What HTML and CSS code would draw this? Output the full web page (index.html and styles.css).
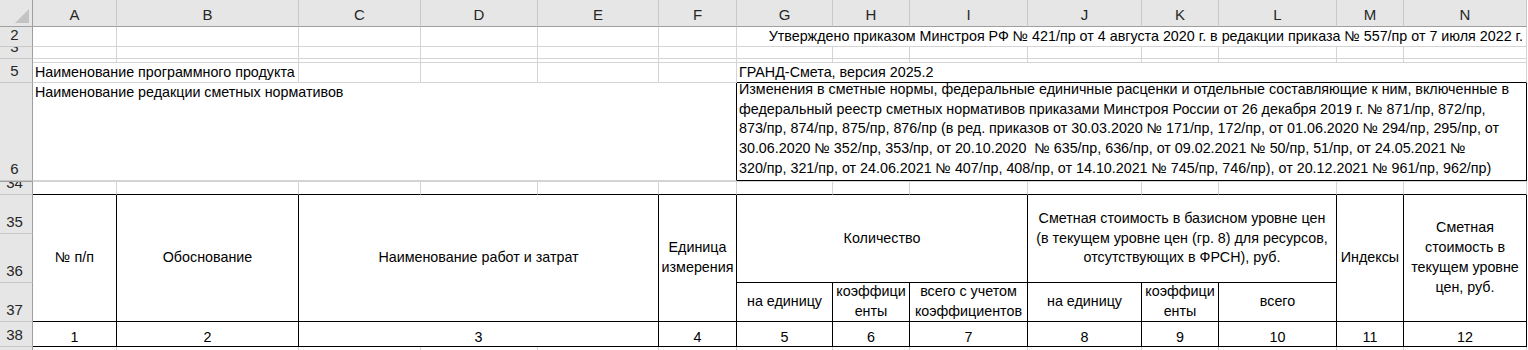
FILE: index.html
```html
<!DOCTYPE html>
<html lang="ru">
<head>
<meta charset="utf-8">
<title>Смета</title>
<link rel="stylesheet" href="styles.css">
</head>
<body>
<div class="sheet">
  <!-- column headers -->
  <div class="corner"><svg class="corner-tri" width="32" height="26" viewBox="0 0 32 26"><polygon points="15,23 29,23 29,9" fill="#c3c3c3"/></svg></div>
  <div class="colhead">A</div>
  <div class="colhead">B</div>
  <div class="colhead">C</div>
  <div class="colhead">D</div>
  <div class="colhead">E</div>
  <div class="colhead">F</div>
  <div class="colhead">G</div>
  <div class="colhead">H</div>
  <div class="colhead">I</div>
  <div class="colhead">J</div>
  <div class="colhead">K</div>
  <div class="colhead">L</div>
  <div class="colhead">M</div>
  <div class="colhead">N</div>

  <!-- row 2 -->
  <div class="rowhead"><span>2</span></div>
  <div class="cell"></div><div class="cell"></div><div class="cell"></div>
  <div class="cell"></div><div class="cell"></div><div class="cell"></div>
  <div class="cell span8 align-right">Утверждено приказом Минстроя РФ № 421/пр от 4 августа 2020 г. в редакции приказа № 557/пр от 7 июля 2022 г.</div>

  <!-- row 3 -->
  <div class="rowhead"><span>3</span></div>
  <div class="cell"></div><div class="cell"></div><div class="cell"></div><div class="cell"></div>
  <div class="cell"></div><div class="cell"></div><div class="cell"></div><div class="cell"></div>
  <div class="cell"></div><div class="cell"></div><div class="cell"></div><div class="cell"></div>
  <div class="cell"></div><div class="cell"></div>

  <!-- row 4 -->
  <div class="rowhead"></div>
  <div class="cell"></div><div class="cell"></div><div class="cell"></div><div class="cell"></div>
  <div class="cell"></div><div class="cell"></div><div class="cell"></div><div class="cell"></div>
  <div class="cell"></div><div class="cell"></div><div class="cell"></div><div class="cell"></div>
  <div class="cell"></div><div class="cell"></div>

  <!-- row 5 -->
  <div class="rowhead"><span>5</span></div>
  <div class="cell span2">Наименование программного продукта</div>
  <div class="cell"></div><div class="cell"></div><div class="cell"></div><div class="cell"></div>
  <div class="cell span8 edge-bottom">ГРАНД-Смета, версия 2025.2</div>

  <!-- row 6 -->
  <div class="rowhead"><span>6</span></div>
  <div class="cell span6 edge-right">Наименование редакции сметных нормативов</div>
  <div class="cell span8 edge-right edge-bottom">
    <div class="distributed">Изменения в сметные нормы, федеральные единичные расценки и отдельные составляющие к ним, включенные в<br>федеральный реестр сметных нормативов приказами Минстроя России от 26 декабря 2019 г. № 871/пр, 872/пр,<br>873/пр, 874/пр, 875/пр, 876/пр (в ред. приказов от 30.03.2020 № 171/пр, 172/пр, от 01.06.2020 № 294/пр, 295/пр, от<br>30.06.2020 № 352/пр, 353/пр, от 20.10.2020&nbsp; № 635/пр, 636/пр, от 09.02.2021 № 50/пр, 51/пр, от 24.05.2021 №<br>320/пр, 321/пр, от 24.06.2021 № 407/пр, 408/пр, от 14.10.2021 № 745/пр, 746/пр), от 20.12.2021 № 961/пр, 962/пр)</div>
  </div>

  <!-- hidden rows 7-33 -->
  <div class="rowhead hidden-rows"></div>
  <div class="cell span14 collapsed"></div>

  <!-- row 34 -->
  <div class="rowhead"><span>34</span></div>
  <div class="cell edge-bottom"></div><div class="cell edge-bottom"></div><div class="cell edge-bottom"></div>
  <div class="cell edge-bottom"></div><div class="cell edge-bottom"></div><div class="cell edge-bottom"></div>
  <div class="cell edge-bottom"></div><div class="cell edge-bottom"></div><div class="cell edge-bottom"></div>
  <div class="cell edge-bottom"></div><div class="cell edge-bottom"></div><div class="cell edge-bottom"></div>
  <div class="cell edge-bottom"></div><div class="cell edge-bottom"></div>

  <!-- row 35 -->
  <div class="rowhead"><span>35</span></div>
  <div class="th rows3">№ п/п</div>
  <div class="th rows3">Обоснование</div>
  <div class="th span3 rows3">Наименование работ и затрат</div>
  <div class="th rows3">Единица<br>измерения</div>
  <div class="th span3 rows2">Количество</div>
  <div class="th span3 rows2">Сметная стоимость в базисном уровне цен<br>(в текущем уровне цен (гр. 8) для ресурсов,<br>отсутствующих в ФРСН), руб.</div>
  <div class="th rows3">Индексы</div>
  <div class="th rows3">Сметная<br>стоимость в<br>текущем уровне<br>цен, руб.</div>

  <!-- row 36 -->
  <div class="rowhead"><span>36</span></div>

  <!-- row 37 -->
  <div class="rowhead"><span>37</span></div>
  <div class="th">на единицу</div>
  <div class="th">коэффици<br>енты</div>
  <div class="th">всего с учетом<br>коэффициентов</div>
  <div class="th">на единицу</div>
  <div class="th">коэффици<br>енты</div>
  <div class="th">всего</div>

  <!-- row 38 -->
  <div class="rowhead"><span>38</span></div>
  <div class="th num">1</div>
  <div class="th num">2</div>
  <div class="th num span3">3</div>
  <div class="th num">4</div>
  <div class="th num">5</div>
  <div class="th num">6</div>
  <div class="th num">7</div>
  <div class="th num">8</div>
  <div class="th num">9</div>
  <div class="th num">10</div>
  <div class="th num">11</div>
  <div class="th num">12</div>

  <!-- row 39 -->
  <div class="rowhead"><span>39</span></div>
  <div class="cell"></div><div class="cell"></div><div class="cell"></div><div class="cell"></div>
  <div class="cell"></div><div class="cell"></div><div class="cell"></div><div class="cell"></div>
  <div class="cell"></div><div class="cell"></div><div class="cell"></div><div class="cell"></div>
  <div class="cell"></div><div class="cell"></div>
</div>
</body>
</html>
```

FILE: styles.css
```css
* {
  box-sizing: border-box;
}

html, body {
  margin: 0;
  padding: 0;
  background: #ffffff;
  overflow: hidden;
}

body {
  width: 1528px;
  height: 350px;
}

.sheet {
  display: grid;
  grid-template-columns: 33px 84px 182px 122px 117px 121px 78px 96px 77px 118px 114px 77px 118px 67px 123px;
  grid-template-rows: 27px 20px 12px 4px 20px 98px 1px 13px 39px 49px 39px 25px 20px;
  width: 1527px;
  font-family: "Liberation Sans", Arial, sans-serif;
  font-size: 14.3px;
  color: #000;
}

/* headers */
.corner {
  background: #e6e6e6;
  border-right: 1px solid #9f9f9f;
  border-bottom: 1px solid #9f9f9f;
}

.corner-tri {
  display: block;
}

.colhead {
  background: #e6e6e6;
  border-right: 1px solid #c8c8c8;
  border-bottom: 1px solid #9f9f9f;
  text-align: center;
  font-size: 15px;
  line-height: 26px;
  padding-top: 2px;
  color: #262626;
}

.rowhead {
  background: #e6e6e6;
  border-right: 1px solid #9f9f9f;
  border-bottom: 1px solid #c8c8c8;
  display: flex;
  align-items: flex-end;
  justify-content: center;
  overflow: hidden;
  padding: 0 3px 4px 0;
  font-size: 15px;
  line-height: 15px;
  color: #262626;
}

.rowhead.hidden-rows {
  border-bottom-color: #9f9f9f;
  padding: 0;
}

/* ordinary cells */
.cell {
  border-right: 1px solid #d4d4d4;
  border-bottom: 1px solid #d4d4d4;
  padding: 0 2px;
  line-height: 18px;
  white-space: nowrap;
}

.cell.align-right {
  text-align: right;
  padding-right: 3px;
}

.cell.collapsed {
  border: none;
  border-bottom: 1px solid #d4d4d4;
}

.edge-right {
  border-right-color: #000;
}

.edge-bottom {
  border-bottom-color: #000;
}

.distributed {
  line-height: 19.7px;
  margin-top: -3px;
}

/* spans */
.span2 { grid-column: span 2; }
.span3 { grid-column: span 3; }
.span6 { grid-column: span 6; }
.span8 { grid-column: span 8; }
.span14 { grid-column: span 14; }
.rows2 { grid-row: span 2; }
.rows3 { grid-row: span 3; }

/* table header */
.th {
  border-right: 1px solid #000;
  border-bottom: 1px solid #000;
  display: flex;
  align-items: center;
  justify-content: center;
  text-align: center;
  line-height: 19.8px;
  padding: 0 2px;
  white-space: nowrap;
}

.th.num {
  align-items: flex-end;
  line-height: 18px;
}
```
